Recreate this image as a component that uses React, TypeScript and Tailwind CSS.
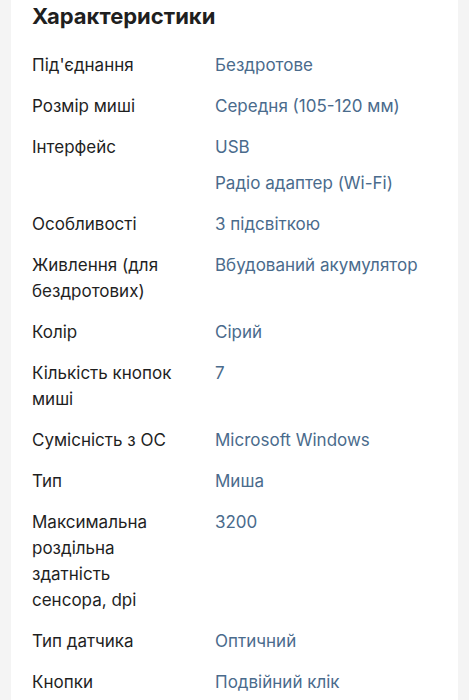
const specs: { label: string; values: string[] }[] = [
  { label: "Під'єднання", values: ["Бездротове"] },
  { label: "Розмір миші", values: ["Середня (105-120 мм)"] },
  { label: "Інтерфейс", values: ["USB", "Радіо адаптер (Wi-Fi)"] },
  { label: "Особливості", values: ["З підсвіткою"] },
  { label: "Живлення (для бездротових)", values: ["Вбудований акумулятор"] },
  { label: "Колір", values: ["Сірий"] },
  { label: "Кількість кнопок миші", values: ["7"] },
  { label: "Сумісність з ОС", values: ["Microsoft Windows"] },
  { label: "Тип", values: ["Миша"] },
  { label: "Максимальна роздільна здатність сенсора, dpi", values: ["3200"] },
  { label: "Тип датчика", values: ["Оптичний"] },
  { label: "Кнопки", values: ["Подвійний клік"] },
];

export default function App() {
  return (
    <div className="min-h-screen bg-[#f4f4f4] px-[11px] font-['Inter',sans-serif]">
      <div className="bg-white min-h-[700px] px-[21px]">
        <h2 className="text-[22px] leading-[32px] font-bold text-[#1f1f1f]">Характеристики</h2>

        <dl className="mt-5 flex flex-col gap-[15px]">
          {specs.map(({ label, values }) => (
            <div key={label} className="grid grid-cols-[148px_1fr] gap-x-[35px]">
              <dt className="text-[17px] leading-[26px] text-[#1f1f1f]">{label}</dt>
              <dd className="flex flex-col gap-[10px]">
                {values.map((v) => (
                  <span key={v} className="text-[17px] leading-[26px] text-[#4a6b8c]">
                    {v}
                  </span>
                ))}
              </dd>
            </div>
          ))}
        </dl>
      </div>
    </div>
  );
}
